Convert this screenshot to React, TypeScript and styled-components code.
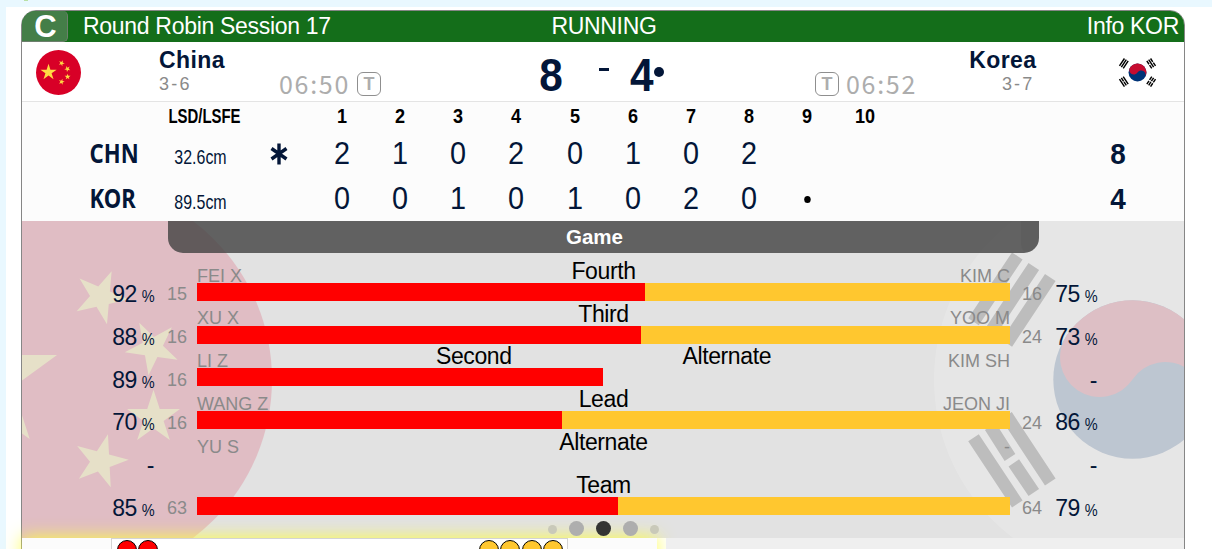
import React from "react";
import styled, { createGlobalStyle } from "styled-components";

const NAVY = "#031638";
const RED = "#ff0000";
const YELLOW = "#ffc72f";

type Position = {
  labels: string[];
  left: { name?: string; pct?: number; count?: number };
  right: { name?: string; pct?: number; count?: number };
  red: number;
  yellow: number;
};

const positions: Position[] = [
  {
    labels: ["Fourth"],
    left: { name: "FEI X", pct: 92, count: 15 },
    right: { name: "KIM C", pct: 75, count: 16 },
    red: 448,
    yellow: 365,
  },
  {
    labels: ["Third"],
    left: { name: "XU X", pct: 88, count: 16 },
    right: { name: "YOO M", pct: 73, count: 24 },
    red: 444,
    yellow: 369,
  },
  {
    labels: ["Second", "Alternate"],
    left: { name: "LI Z", pct: 89, count: 16 },
    right: { name: "KIM SH" },
    red: 406,
    yellow: 0,
  },
  {
    labels: ["Lead"],
    left: { name: "WANG Z", pct: 70, count: 16 },
    right: { name: "JEON JI", pct: 86, count: 24 },
    red: 365,
    yellow: 448,
  },
  {
    labels: ["Alternate"],
    left: { name: "YU S" },
    right: { name: "-" },
    red: 0,
    yellow: 0,
  },
  {
    labels: ["Team"],
    left: { pct: 85, count: 63 },
    right: { pct: 79, count: 64 },
    red: 421,
    yellow: 392,
  },
];

const ends = [1, 2, 3, 4, 5, 6, 7, 8, 9, 10];

const lines = [
  { code: "CHN", draw: "32.6cm", hammer: true, scores: [2, 1, 0, 2, 0, 1, 0, 2], next: false, total: 8 },
  { code: "KOR", draw: "89.5cm", hammer: false, scores: [0, 0, 1, 0, 1, 0, 2, 0], next: true, total: 4 },
];

function star(cx: number, cy: number, r: number, deg: number) {
  return Array.from({ length: 10 }, (_, i) => {
    const a = ((deg + i * 36) * Math.PI) / 180;
    const d = i % 2 ? r * 0.382 : r;
    return `${(cx + d * Math.cos(a)).toFixed(2)},${(cy + d * Math.sin(a)).toFixed(2)}`;
  }).join(" ");
}

function ChinaFlag() {
  return (
    <svg viewBox="-198.5 -198.5 397 397" width="100%" height="100%">
      <circle r="198.5" fill="#d80027" />
      <g fill="#ffda44">
        <polygon points={star(-88, -1.3, 75.2, -90)} />
        <polygon points={star(27.2, -82.6, 28, -67)} />
        <polygon points={star(78.9, -32, 28, 98)} />
        <polygon points={star(80, 38.1, 27.8, -90)} />
        <polygon points={star(27.2, 81.7, 28, -3)} />
      </g>
    </svg>
  );
}

function KoreaFlag() {
  return (
    <svg viewBox="-198.5 -198.5 397 397" width="100%" height="100%">
      <circle r="198.5" fill="#fff" />
      <circle r="79.2" fill="#003478" />
      <path
        transform="rotate(34)"
        d="M-79.2 0A79.2 79.2 0 0 1 79.2 0A39.6 39.6 0 0 0 0 0A39.6 39.6 0 0 1 -79.2 0Z"
        fill="#c60c30"
      />
      <g stroke="#000" strokeWidth="12.7">
        <path d="M-115.2 -123.6L-159 -57.8M-98.7 -113.1L-142.3 -47.1M-82.2 -102.1L-125.7 -36.3" />
        <path d="M-159 58.2L-115.2 124.5M-142.2 47L-122.5 78M-118.7 83.4L-98.7 113M-126 36L-82.2 102.5" />
        <path d="M115.2 -123.6L134.6 -94.5M139.6 -87L159 -57.8M98.7 -113.1L142.3 -47.1M82.2 -102.1L101.5 -72.8M106.4 -65.5L125.7 -36.3" />
        <path d="M159 58.2L139.6 87.4M134.6 95L115.2 124.5M142.2 47L122.7 76.4M118 83.5L98.7 113M126 36L106.5 65.6M101.5 73.2L82.2 102.5" />
      </g>
    </svg>
  );
}

function Hammer() {
  return (
    <svg width="18" height="22" viewBox="0 0 18 22">
      <path d="M9 .5V21.5M1.5 5.5L16.5 16M1.5 16L16.5 5.5" stroke={NAVY} strokeWidth="3.4" fill="none" />
    </svg>
  );
}

function Percent({ value }: { value?: number }) {
  if (value === undefined) return <Pct>-</Pct>;
  return (
    <Pct>
      {value}
      <PctSign>%</PctSign>
    </Pct>
  );
}

export default function App() {
  return (
    <>
      <GlobalStyle />
      <Page>
        <Sprout />
        <Sheet>
          <Card>
            <TitleBar>
              <SheetBadge>C</SheetBadge>
              <TitleText $align="left">Round Robin Session 17</TitleText>
              <TitleText $align="center">RUNNING</TitleText>
              <TitleText $align="right">Info KOR</TitleText>
            </TitleBar>

            <TeamRow>
              <FlagSlot $pad={14}>
                <ChinaFlag />
              </FlagSlot>
              <TeamBlock $align="left">
                <TeamName>China</TeamName>
                <Record>3-6</Record>
              </TeamBlock>
              <Clock>
                <Time>06:50</Time>
                <TimeoutBox>T</TimeoutBox>
              </Clock>
              <Score>
                <ScoreDigit $width={50}>8</ScoreDigit>
                <ScoreDash />
                <ScoreDigit $width={25}>4</ScoreDigit>
                <ScoreDot />
              </Score>
              <Clock>
                <TimeoutBox>T</TimeoutBox>
                <Time>06:52</Time>
              </Clock>
              <TeamBlock $align="right">
                <TeamName>Korea</TeamName>
                <Record>3-7</Record>
              </TeamBlock>
              <FlagSlot $pad={78.5}>
                <KoreaFlag />
              </FlagSlot>
            </TeamRow>

            <Linescore>
              <LineRow $height={29}>
                <span />
                <HeadCell $squeeze={0.71}>LSD/LSFE</HeadCell>
                <span />
                {ends.map((n) => (
                  <HeadCell key={n} $squeeze={0.86}>
                    {n}
                  </HeadCell>
                ))}
              </LineRow>
              {lines.map((line) => (
                <LineRow key={line.code} $height={45}>
                  <Code>{line.code}</Code>
                  <Draw>{line.draw}</Draw>
                  <HammerCell>{line.hammer && <Hammer />}</HammerCell>
                  {ends.map((n, i) => (
                    <EndCell key={n}>
                      {line.scores[i]}
                      {line.next && i === line.scores.length && <NextDot />}
                    </EndCell>
                  ))}
                  <Total>{line.total}</Total>
                </LineRow>
              ))}
            </Linescore>

            <Stats>
              <FlagBackdrop $left={-147}>
                <ChinaFlag />
              </FlagBackdrop>
              <FlagBackdrop $left={912}>
                <KoreaFlag />
              </FlagBackdrop>
              <StatsContent>
                <GameTab>
                  <GameTitle>Game</GameTitle>
                  <GameTabEnd />
                </GameTab>
                <StatRows>
                  {positions.map((p, i) => (
                    <StatRow key={i}>
                      <Percent value={p.left.pct} />
                      <Count>{p.left.count}</Count>
                      <Middle>
                        <Labels>
                          <Player $side="left">{p.left.name}</Player>
                          <LabelGroup>
                            {p.labels.map((label) => (
                              <span key={label}>{label}</span>
                            ))}
                          </LabelGroup>
                          <Player $side="right">{p.right.name}</Player>
                        </Labels>
                        <BarTrack>
                          <Bar $color={RED} style={{ width: p.red }} />
                          <Bar $color={YELLOW} style={{ width: p.yellow }} />
                        </BarTrack>
                      </Middle>
                      <Count>{p.right.count}</Count>
                      <Percent value={p.right.pct} />
                    </StatRow>
                  ))}
                </StatRows>
                <Dots>
                  <Dot $size={9} $color="#c9c9b9" />
                  <Dot $size={15} $color="#aeaeae" />
                  <Dot $size={15} $color="#333" />
                  <Dot $size={15} $color="#aeaeae" />
                  <Dot $size={9} $color="#c9c9b9" />
                </Dots>
              </StatsContent>
            </Stats>

            <Footer>
              <StonePanel>
                <StoneBox>
                  <StoneGroup>
                    <Stone $color={RED} />
                    <Stone $color={RED} />
                  </StoneGroup>
                  <StoneGroup>
                    <Stone $color={YELLOW} />
                    <Stone $color={YELLOW} />
                    <Stone $color={YELLOW} />
                    <Stone $color={YELLOW} />
                  </StoneGroup>
                </StoneBox>
              </StonePanel>
              <FooterRest />
            </Footer>
          </Card>
        </Sheet>
      </Page>
    </>
  );
}

const GlobalStyle = createGlobalStyle`
  * {
    box-sizing: border-box;
  }

  body {
    margin: 0;
    font-family: "Liberation Sans", Arial, sans-serif;
  }

  svg {
    display: block;
  }
`;

const Page = styled.div`
  position: relative;
  height: 549px;
  padding: 7px 0 0 6px;
  overflow: hidden;
  background: #e9f8ff;
`;

const Sprout = styled.div`
  position: absolute;
  left: 24px;
  top: 0;
  width: 4px;
  height: 1px;
  background: #b9e0a5;
`;

const Sheet = styled.div`
  height: 542px;
  padding: 3px 0 0 15px;
  background: #fff;
`;

const Card = styled.div`
  width: 1164px;
  height: 560px;
  border: 1px solid #868686;
  border-radius: 15px 15px 0 0;
`;

const TitleBar = styled.div`
  display: grid;
  grid-template-columns: 46px 480px 112px 1fr;
  height: 31px;
  padding-right: 5px;
  border-radius: 14px 14px 0 0;
  background: #146e1a;
  color: #fff;
`;

const SheetBadge = styled.div`
  border: 1px solid #6d7f6d;
  border-width: 0 1px 1px 0;
  border-radius: 14px 5px 5px 0;
  background: #447e48;
  font-size: 31px;
  font-weight: 700;
  line-height: 32px;
  height: 31px;
  text-align: center;
  text-indent: 2px;
`;

const TitleText = styled.div<{ $align: string }>`
  padding-left: ${(p) => (p.$align === "left" ? 15 : 0)}px;
  font-size: 23px;
  letter-spacing: -0.3px;
  line-height: 31px;
  text-align: ${(p) => p.$align};
  white-space: nowrap;
`;

const TeamRow = styled.div`
  display: grid;
  grid-template-columns: 137px 119px 103px 434px 103px 118px 148px;
  height: 60px;
  border-bottom: 1px solid #e4e4e4;
`;

const FlagSlot = styled.div<{ $pad: number }>`
  width: ${(p) => p.$pad + 45}px;
  height: 53px;
  padding: 8px 0 0 ${(p) => p.$pad}px;
`;

const TeamBlock = styled.div<{ $align: string }>`
  padding-top: 4px;
  margin-right: -0.5px;
  text-align: ${(p) => p.$align};
`;

const TeamName = styled.div`
  color: ${NAVY};
  font-size: 23px;
  font-weight: 700;
  letter-spacing: 0.4px;
  line-height: 28px;
`;

const Record = styled.div`
  margin-right: 2px;
  color: #8a8a8a;
  font-size: 18px;
  letter-spacing: 2.2px;
  line-height: 21px;
`;

const Clock = styled.div`
  display: flex;
  align-items: flex-start;
  justify-content: space-between;
`;

const Time = styled.div`
  margin: 26px 1px 0;
  color: #adadad;
  font-family: "Noto Sans CJK SC", sans-serif;
  font-size: 25px;
  letter-spacing: 1.7px;
  line-height: 30px;
`;

const TimeoutBox = styled.div`
  width: 24px;
  height: 24px;
  margin-top: 30px;
  border: 1px solid #8f8f8f;
  border-radius: 6px;
  color: #adadad;
  font-size: 18px;
  font-weight: 700;
  line-height: 23px;
  text-align: center;
`;

const Score = styled.div`
  display: flex;
  align-items: flex-start;
  padding: 8px 0 0 145px;
  color: ${NAVY};
`;

const ScoreDigit = styled.div<{ $width: number }>`
  width: ${(p) => p.$width}px;
  font-size: 46px;
  font-weight: 700;
  line-height: 50px;
  text-align: center;
  transform: scaleX(0.92);
`;

const ScoreDash = styled.div`
  width: 10px;
  height: 3px;
  margin: 18px 20px 0 23px;
  background: ${NAVY};
`;

const ScoreDot = styled.div`
  width: 10px;
  height: 10px;
  margin: 17px 0 0;
  border-radius: 50%;
  background: ${NAVY};
`;

const Linescore = styled.div`
  height: 119px;
  background: #fcfcfc;
  color: ${NAVY};
`;

const LineRow = styled.div<{ $height: number }>`
  display: grid;
  grid-template-columns: 146px 73px 72px repeat(10, 58.17px) 1fr;
  height: ${(p) => p.$height}px;
  line-height: ${(p) => p.$height}px;
`;

const HeadCell = styled.div<{ $squeeze: number }>`
  display: flex;
  justify-content: center;
  color: #000;
  font-size: 21px;
  font-weight: 700;
  line-height: 27px;
  transform: scaleX(${(p) => p.$squeeze});
`;

const Code = styled.div`
  padding-left: 68px;
  font-family: "Noto Sans", sans-serif;
  font-size: 26px;
  font-weight: 700;
  line-height: 44px;
  transform: scaleX(0.85);
  transform-origin: 65px 50%;
`;

const Draw = styled.div`
  display: flex;
  justify-content: center;
  padding-top: 3px;
  margin-right: 8px;
  font-size: 21px;
  transform: scaleX(0.76);
`;

const HammerCell = styled.div`
  display: flex;
  align-items: center;
  justify-content: center;
  padding: 0 0 2px 4px;
`;

const EndCell = styled.div`
  display: flex;
  align-items: center;
  justify-content: center;
  padding-bottom: 4px;
  font-size: 31px;
  line-height: 41px;
  transform: scaleX(0.93);
`;

const NextDot = styled.div`
  width: 7px;
  height: 7px;
  margin-top: 2px;
  border-radius: 50%;
  background: #000;
`;

const Total = styled.div`
  width: 132px;
  justify-self: end;
  font-size: 30px;
  font-weight: 700;
  text-align: center;
  transform: scaleX(0.93);
`;

const Stats = styled.div`
  position: relative;
  height: 317px;
  overflow: hidden;
  background: #e2e2e2;
`;

const FlagBackdrop = styled.div<{ $left: number }>`
  position: absolute;
  left: ${(p) => p.$left}px;
  top: -40px;
  width: 397px;
  height: 397px;
  opacity: 0.155;
`;

const StatsContent = styled.div`
  position: relative;
  z-index: 1;
`;

const GameTab = styled.div`
  display: flex;
  width: 871px;
  height: 32px;
  margin-left: 146px;
  border-radius: 0 0 15px 15px;
  background: rgba(65, 65, 65, 0.8);
  overflow: hidden;
`;

const GameTitle = styled.div`
  flex: 1;
  color: #fff;
  font-size: 20.5px;
  font-weight: 700;
  line-height: 32px;
  text-align: center;
`;

const GameTabEnd = styled.div`
  width: 18px;
  border-radius: 0 0 0 8px;
  background: rgba(0, 0, 0, 0.03);
`;

const StatRows = styled.div`
  padding-top: 4.9px;
`;

const StatRow = styled.div`
  display: grid;
  grid-template-columns: 132px 33px 823px 32px 55px;
  height: 42.75px;
`;

const Pct = styled.div`
  padding-top: 22.3px;
  color: ${NAVY};
  font-size: 23px;
  letter-spacing: -0.5px;
  line-height: 28px;
  text-align: right;
  white-space: nowrap;
`;

const PctSign = styled.span`
  display: inline-block;
  margin-left: 3px;
  font-size: 16.5px;
  transform: scaleX(0.88);
  transform-origin: 100% 50%;
`;

const Count = styled.div`
  padding-top: 22.4px;
  color: #8a8a8a;
  font-size: 18px;
  line-height: 28px;
  text-align: right;
`;

const Middle = styled.div`
  width: 813px;
  margin-left: 10px;
`;

const Labels = styled.div`
  display: grid;
  grid-template-columns: 1fr auto 1fr;
  height: 25px;
`;

const LabelGroup = styled.div`
  display: flex;
  gap: 171px;
  font-size: 23px;
  letter-spacing: -0.4px;
  line-height: 27.4px;
`;

const Player = styled.div<{ $side: string }>`
  padding-top: 3.75px;
  color: #8a8a8a;
  font-size: 18px;
  line-height: 28px;
  text-align: ${(p) => p.$side};
`;

const BarTrack = styled.div`
  display: flex;
  height: 18px;
`;

const Bar = styled.div<{ $color: string }>`
  height: 18px;
  background: ${(p) => p.$color};
`;

const Dots = styled.div`
  display: flex;
  align-items: center;
  justify-content: center;
  gap: 12px;
  height: 28px;
`;

const Dot = styled.div<{ $size: number; $color: string }>`
  width: ${(p) => p.$size}px;
  height: ${(p) => p.$size}px;
  margin: ${(p) => (p.$size < 10 ? "2px 0 0" : "0")};
  border-radius: 50%;
  background: ${(p) => p.$color};
`;

const Footer = styled.div`
  display: flex;
  height: 22px;
`;

const StonePanel = styled.div`
  position: relative;
  width: 635px;
  padding-left: 89px;
  background: #fcfcfc;
  box-shadow: 0 0 18px #ffff3c;
`;

const StoneBox = styled.div`
  display: flex;
  justify-content: space-between;
  width: 457px;
  height: 22px;
  padding: 1px 4px 0 5px;
  border: 1px solid #d4d4d4;
  background: #fff;
`;

const StoneGroup = styled.div`
  display: flex;
  gap: 1.3px;
`;

const Stone = styled.div<{ $color: string }>`
  width: 20px;
  height: 20px;
  border: 1.5px solid #000;
  border-radius: 50%;
  background: ${(p) => p.$color};
`;

const FooterRest = styled.div`
  position: relative;
  flex: 1;
  margin-left: 9px;
  background: #efefef;
`;
